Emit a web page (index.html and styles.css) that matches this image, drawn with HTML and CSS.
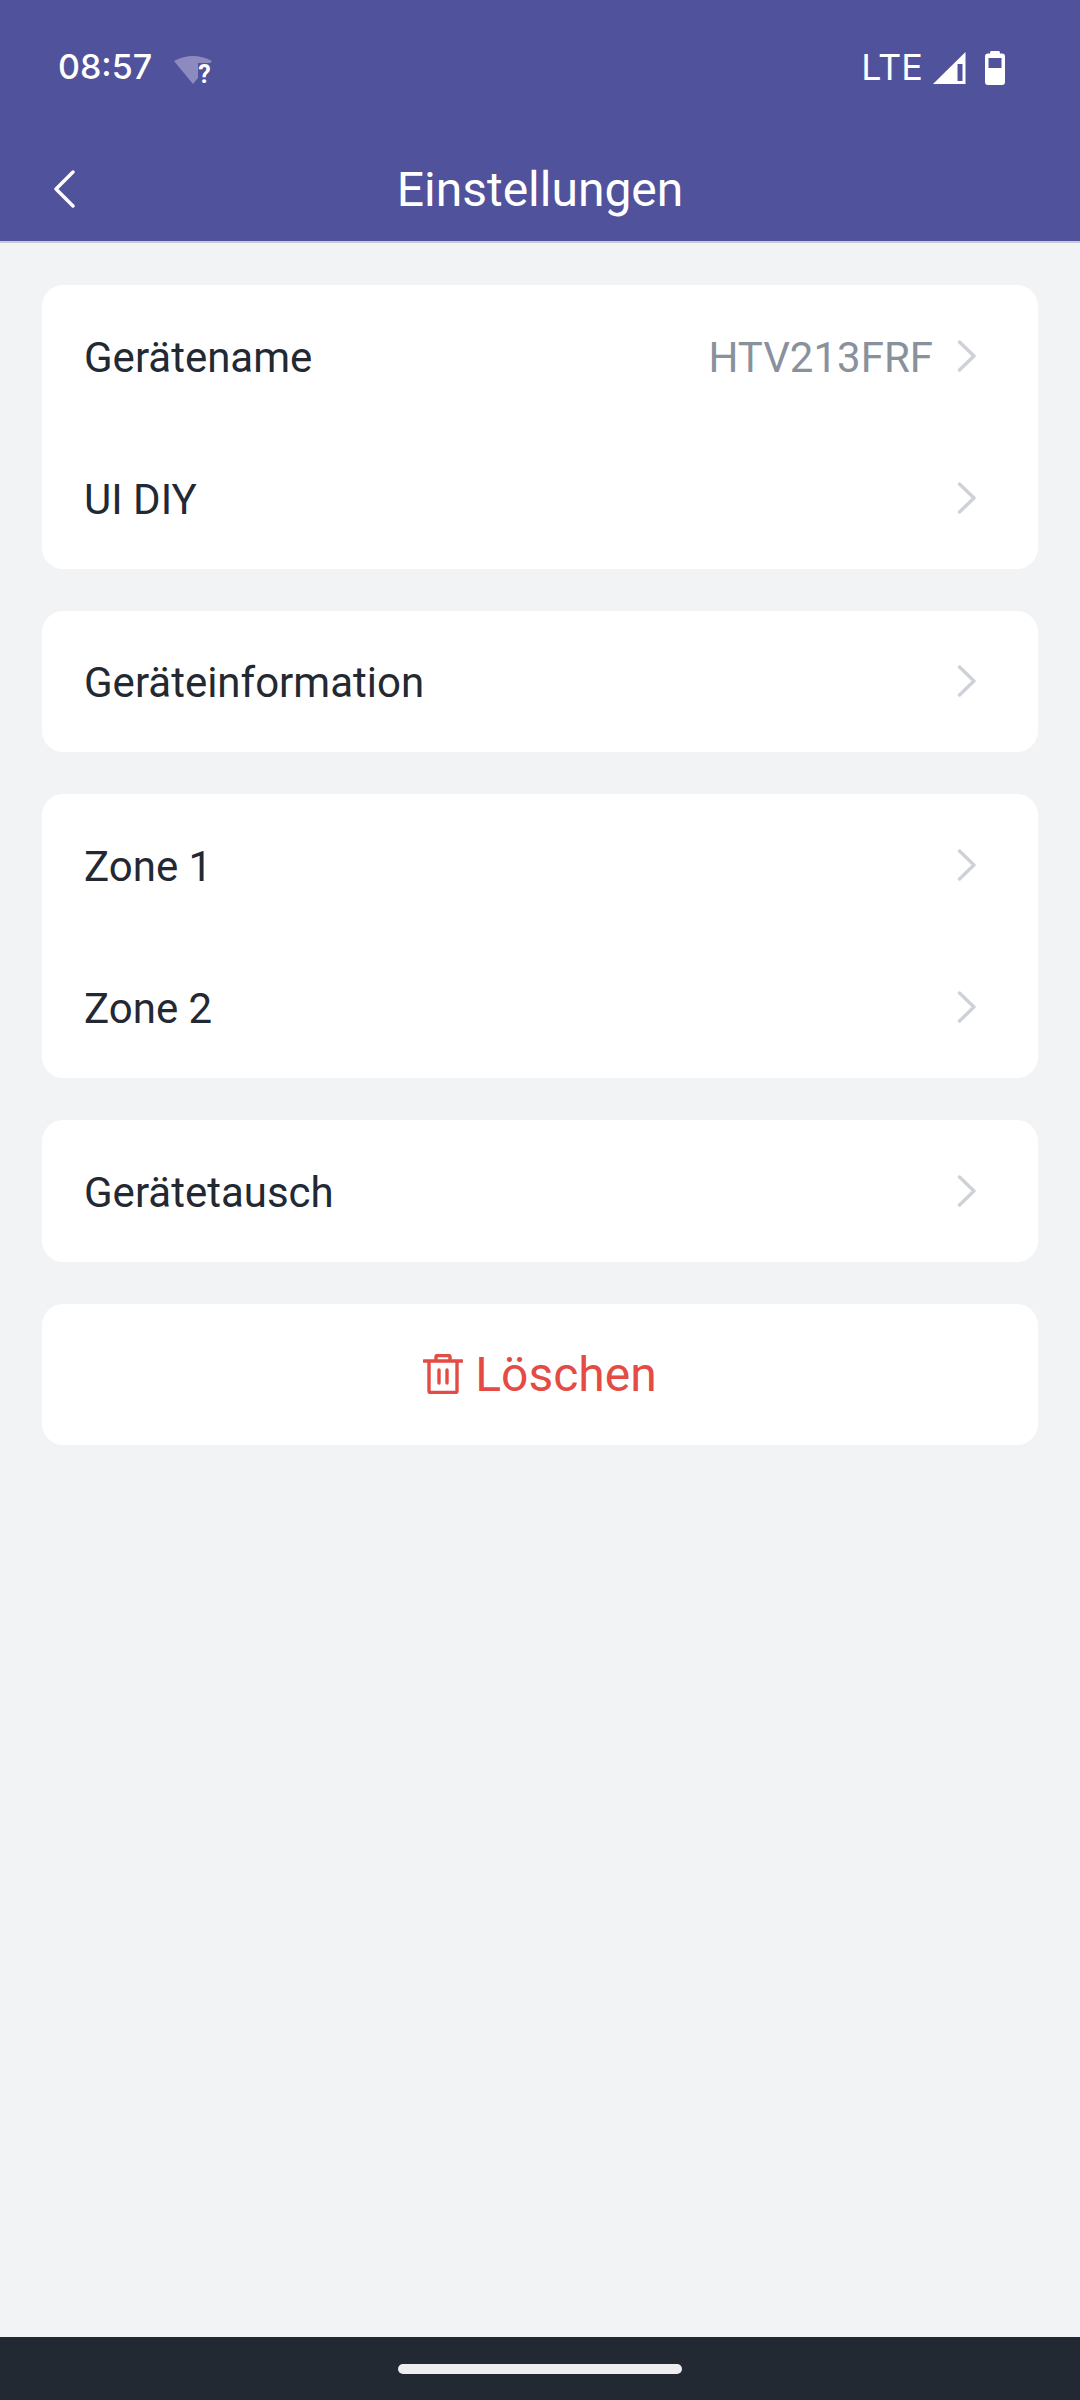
FILE: index.html
```html
<!DOCTYPE html>
<html lang="de">
<head>
    <meta charset="UTF-8">
    <meta name="viewport" content="width=device-width, initial-scale=1.0">
    <title>Einstellungen</title>
    <link rel="stylesheet" href="styles.css">
</head>
<body>
    <div class="page">
        <header class="header">
            <div class="status-bar">
                <div class="status-left">
                    <span class="clock">08:57</span>
                    <svg class="wifi-icon" width="38" height="38" viewBox="0 0 38 38">
                        <path d="M0 7 Q19 -3 38 7 L36.300 9 H24 V24 L19 30 Z" fill="#8d8ac0"/>
                        <text x="30.500" y="29" class="wifi-mark">?</text>
                    </svg>
                </div>
                <div class="status-right">
                    <span class="lte">LTE</span>
                    <svg class="signal-icon" width="33" height="33" viewBox="0 0 33 33">
                        <path d="M32.500 0 V32 H0 Z" fill="#fff"/>
                        <path d="M24.500 12 H29.500 V29 H24.500 Z" fill="#51529c"/>
                    </svg>
                    <svg class="battery-icon" width="20" height="34" viewBox="0 0 20 34">
                        <path d="M6 0 H14 Q15 0 15 2.500 H17 Q20 2.500 20 5.500 V31 Q20 34 17 34 H3 Q0 34 0 31 V5.500 Q0 2.500 3 2.500 H5 Q5 0 6 0 Z" fill="#fff"/>
                        <rect x="3.500" y="7" width="13" height="10" fill="#51529c"/>
                    </svg>
                </div>
            </div>
            <div class="title-bar">
                <svg class="back-icon" width="24" height="38" viewBox="0 0 24 38">
                    <path d="M21 2 L4 19 L21 36" fill="none" stroke="#fff" stroke-width="3.400" stroke-linecap="round" stroke-linejoin="round"/>
                </svg>
                <h1 class="title">Einstellungen</h1>
            </div>
        </header>

        <main class="content">
            <section class="card">
                <div class="row">
                    <span class="row-label">Gerätename</span>
                    <span class="row-value">HTV213FRF</span>
                    <svg class="chevron" width="20" height="32" viewBox="0 0 20 32"><path d="M2.500 2 L17 16 L2.500 30"/></svg>
                </div>
                <div class="row">
                    <span class="row-label">UI DIY</span>
                    <svg class="chevron" width="20" height="32" viewBox="0 0 20 32"><path d="M2.500 2 L17 16 L2.500 30"/></svg>
                </div>
            </section>
            <section class="card">
                <div class="row">
                    <span class="row-label">Geräteinformation</span>
                    <svg class="chevron" width="20" height="32" viewBox="0 0 20 32"><path d="M2.500 2 L17 16 L2.500 30"/></svg>
                </div>
            </section>
            <section class="card">
                <div class="row">
                    <span class="row-label">Zone 1</span>
                    <svg class="chevron" width="20" height="32" viewBox="0 0 20 32"><path d="M2.500 2 L17 16 L2.500 30"/></svg>
                </div>
                <div class="row">
                    <span class="row-label">Zone 2</span>
                    <svg class="chevron" width="20" height="32" viewBox="0 0 20 32"><path d="M2.500 2 L17 16 L2.500 30"/></svg>
                </div>
            </section>
            <section class="card">
                <div class="row">
                    <span class="row-label">Gerätetausch</span>
                    <svg class="chevron" width="20" height="32" viewBox="0 0 20 32"><path d="M2.500 2 L17 16 L2.500 30"/></svg>
                </div>
            </section>
            <section class="card">
                <div class="row row-delete">
                    <svg class="trash-icon" width="40" height="40" viewBox="0 0 40 40">
                        <path d="M1 7 H39 M6 7 V37 Q6 38.500 7.500 38.500 H32.500 Q34 38.500 34 37 V7 M13 7 V3 Q13 1.500 14.500 1.500 H25.500 Q27 1.500 27 3 V7 M16 16 V29 M24 16 V29"/>
                    </svg>
                    <span class="delete-label">Löschen</span>
                </div>
            </section>
        </main>

        <footer class="nav-bar">
            <div class="home-pill"></div>
        </footer>
    </div>
</body>
</html>
```

FILE: styles.css
```css
* {
    box-sizing: border-box;
}
html, body {
    margin: 0;
    padding: 0;
}
body {
    font-family: Roboto, "Liberation Sans", sans-serif;
    background-color: #f2f3f5;
    color: #222933;
}
.page {
    width: 1080px;
    height: 2400px;
    display: flex;
    flex-direction: column;
}
.header {
    height: 243px;
    background-color: #51529c;
    border-bottom: 2px solid #c9c9d6;
    color: #fff;
}
.status-bar {
    height: 136px;
    padding: 51px 75px 0 58px;
    display: flex;
    justify-content: space-between;
    align-items: flex-start;
}
.status-left, .status-right {
    display: flex;
    align-items: center;
}
.clock {
    align-self: flex-start;
    font-family: Inter, Roboto, sans-serif;
    font-size: 34px;
    line-height: 32px;
    font-weight: 500;
}
.wifi-icon {
    margin: 3px 0 0 22px;
    align-self: flex-start;
}
.wifi-mark {
    font-family: Roboto, sans-serif;
    font-size: 25px;
    font-weight: 700;
    fill: #fff;
    text-anchor: middle;
}
.lte {
    font-family: Inter, Roboto, sans-serif;
    font-size: 36px;
    line-height: 32px;
    margin-bottom: 2px;
    font-weight: 400;
}
.signal-icon {
    margin-left: 10px;
}
.battery-icon {
    margin-left: 19px;
}
.title-bar {
    height: 105px;
    padding-left: 52px;
    display: flex;
    align-items: center;
    position: relative;
}
.title {
    position: absolute;
    left: 0;
    right: 0;
    margin: 2px 0 0;
    text-align: center;
    font-size: 48px;
    font-weight: 400;
}
.content {
    flex: 1;
    padding: 42px 42px 0;
    display: flex;
    flex-direction: column;
    gap: 42px;
}
.card {
    background-color: #fff;
    border-radius: 21px;
}
.row {
    height: 141.750px;
    padding: 0 61px 0 42px;
    display: flex;
    align-items: center;
    font-size: 42px;
}
.row-label {
    flex: 1;
    margin-top: 3px;
}
.row-value {
    color: #89919c;
    margin: 3px 24px 0 0;
}
.chevron {
    fill: none;
    stroke: #ced1d7;
    stroke-width: 3.400;
    stroke-linecap: round;
    stroke-linejoin: round;
}
.row-delete {
    padding: 0;
    justify-content: center;
    color: #e54b45;
}
.trash-icon {
    margin-right: 12px;
    fill: none;
    stroke: #e54b45;
    stroke-width: 3.400;
    stroke-linecap: round;
    stroke-linejoin: round;
}
.delete-label {
    font-size: 48px;
}
.nav-bar {
    height: 63px;
    background-color: #222933;
    display: flex;
    justify-content: center;
    align-items: center;
}
.home-pill {
    width: 284px;
    height: 10px;
    border-radius: 5px;
    background-color: #eeedef;
}
```
